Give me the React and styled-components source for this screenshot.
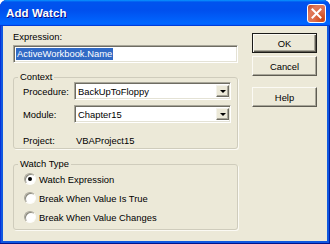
import React from 'react';
import styled, { createGlobalStyle } from 'styled-components';

const Global = createGlobalStyle`
  html, body {
    margin: 0;
    padding: 0;
    background: #ffffff;
  }
  body {
    font-family: "Liberation Sans", Arial, sans-serif;
    font-size: 9.4px;
    color: #000;
  }
`;

const Window = styled.div`
  width: 330px;
  height: 244px;
  box-sizing: border-box;
  display: flex;
  flex-direction: column;
  padding: 0 3px 3px;
  border-radius: 7px 7px 0 0;
  overflow: hidden;
  background: #1058e0;
  box-shadow: inset 0 -1px 0 #00138c, inset 1px 0 0 #0831d9, inset -1px 0 0 #001ea0;
`;

const TitleBar = styled.div`
  height: 26px;
  flex: none;
  margin: 0 -3px;
  display: flex;
  align-items: center;
  justify-content: space-between;
  padding: 0 4px 0 6px;
  background: linear-gradient(180deg, #0997ff, #0053ee 8%, #0050ee 40%, #0066ff 88%, #0066ff 93%, #005bff 95%, #003dd7 96%, #003dd7);
`;

const Title = styled.span`
  color: #fff;
  font-weight: bold;
  font-size: 11.5px;
  letter-spacing: 0.1px;
  text-shadow: 1px 1px 0 #0f1089;
`;

const CloseButton = styled.div`
  width: 19px;
  height: 19px;
  box-sizing: border-box;
  border: 1px solid #fff;
  border-radius: 3px;
  background: radial-gradient(circle at 85% 85%, #cc4614 0%, #dc6c4a 40%, #e07a5c 70%, #c2431f 100%);
  display: flex;
  align-items: center;
  justify-content: center;
`;

const Body = styled.div`
  flex: 1;
  display: flex;
  gap: 14px;
  padding: 5px 10px 0;
  background: #ece9d8;
`;

const LeftCol = styled.div`
  width: 225px;
  display: flex;
  flex-direction: column;
`;

const RightCol = styled.div`
  width: 65px;
  display: flex;
  flex-direction: column;
  padding-top: 2px;
`;

const Label = styled.div`
  line-height: 12px;
  height: 12px;
  white-space: nowrap;
`;

const sunken = `
  box-sizing: border-box;
  background: #fff;
  border: 1px solid;
  border-color: #a8a699 #ffffff #ffffff #a8a699;
  box-shadow: inset 1px 1px 0 #6e6c62, inset -1px -1px 0 #e4e2d5;
`;

const TextBox = styled.div`
  ${sunken}
  margin-top: 2px;
  height: 18px;
  padding: 0 2px;
  display: flex;
  align-items: center;
`;

const Selected = styled.span`
  background: #316ac5;
  color: #fff;
  padding: 0 1px;
  line-height: 12px;
`;

const Group = styled.fieldset`
  margin: ${(p) => p.$top}px 0 0;
  padding: 0 6px ${(p) => p.$bottom}px 4px;
  border: 1px solid #cfccbc;
  border-radius: 3px;
  box-shadow: 1px 1px 0 #fbfaf4;
  min-width: 0;
  display: flex;
  flex-direction: column;
`;

const Legend = styled.legend`
  padding: 0 2px;
  line-height: 10px;
  height: 10px;
`;

const FieldRow = styled.div`
  display: flex;
  align-items: center;
  height: ${(p) => p.$h}px;
  margin-top: ${(p) => p.$gap || 0}px;
  padding-left: 5px;
`;

const FieldLabel = styled.div`
  width: 51px;
  flex: none;
  white-space: nowrap;
`;

const Value = styled.div`
  padding-left: 2px;
`;

const Combo = styled.div`
  ${sunken}
  flex: 1;
  height: 18px;
  display: flex;
  align-items: stretch;
  padding: 2px 1px 2px 2px;
`;

const ComboText = styled.div`
  flex: 1;
  display: flex;
  align-items: center;
  padding-left: 1px;
`;

const DropButton = styled.div`
  width: 13px;
  box-sizing: border-box;
  background: #ece9d8;
  border: 1px solid;
  border-color: #f4f3ec #6e6c62 #6e6c62 #f4f3ec;
  box-shadow: inset -1px -1px 0 #a8a699;
  display: flex;
  align-items: center;
  justify-content: center;
`;

const Arrow = styled.div`
  width: 0;
  height: 0;
  border-left: 3px solid transparent;
  border-right: 3px solid transparent;
  border-top: 3px solid #000;
`;

const RadioRow = styled.div`
  display: flex;
  align-items: center;
  gap: 3px;
  height: 14px;
  margin-top: ${(p) => p.$gap}px;
  padding-left: 6px;
`;

const RadioDot = styled.div`
  width: 12px;
  height: 12px;
  box-sizing: border-box;
  border-radius: 50%;
  background: #fff;
  border: 1px solid;
  border-color: #a8a699 #fdfdf9 #fdfdf9 #a8a699;
  box-shadow: inset 1px 1px 0 #8a887c;
  display: flex;
  align-items: center;
  justify-content: center;

  &::after {
    content: '';
    width: 4px;
    height: 4px;
    border-radius: 50%;
    background: ${(p) => (p.$checked ? '#000' : 'transparent')};
  }
`;

const Button = styled.div`
  height: 20px;
  box-sizing: border-box;
  margin-top: ${(p) => p.$gap}px;
  display: flex;
  align-items: center;
  justify-content: center;
  background: #ece9d8;
  border: 1px solid;
  border-color: ${(p) => (p.$default ? '#1b1b18' : '#fbfaf4 #5e5c52 #5e5c52 #fbfaf4')};
  box-shadow: ${(p) =>
    p.$default
      ? 'inset 1px 1px 0 #fbfaf4, inset -1px -1px 0 #5e5c52, inset -2px -2px 0 #a8a699'
      : 'inset -1px -1px 0 #a8a699'};
`;

const radios = [
  { label: 'Watch Expression', checked: true },
  { label: 'Break When Value Is True' },
  { label: 'Break When Value Changes' },
];

export default function App() {
  return (
    <>
      <Global />
      <Window>
        <TitleBar>
          <Title>Add Watch</Title>
          <CloseButton>
            <svg width="11" height="11" viewBox="0 0 11 11">
              <path d="M1.5 1.5 L9.5 9.5 M9.5 1.5 L1.5 9.5" stroke="#fff" strokeWidth="2" strokeLinecap="square" />
            </svg>
          </CloseButton>
        </TitleBar>
        <Body>
          <LeftCol>
            <Label>Expression:</Label>
            <TextBox>
              <Selected>ActiveWorkbook.Name</Selected>
            </TextBox>

            <Group $top={9} $bottom={2}>
              <Legend>Context</Legend>
              <FieldRow $h={18}>
                <FieldLabel>Procedure:</FieldLabel>
                <Combo>
                  <ComboText>BackUpToFloppy</ComboText>
                  <DropButton><Arrow /></DropButton>
                </Combo>
              </FieldRow>
              <FieldRow $h={18} $gap={5}>
                <FieldLabel>Module:</FieldLabel>
                <Combo>
                  <ComboText>Chapter15</ComboText>
                  <DropButton><Arrow /></DropButton>
                </Combo>
              </FieldRow>
              <FieldRow $h={12} $gap={11}>
                <FieldLabel>Project:</FieldLabel>
                <Value>VBAProject15</Value>
              </FieldRow>
            </Group>

            <Group $top={10} $bottom={5}>
              <Legend>Watch Type</Legend>
              {radios.map((r, i) => (
                <RadioRow key={r.label} $gap={i === 0 ? 3 : 5}>
                  <RadioDot $checked={r.checked} />
                  <span>{r.label}</span>
                </RadioRow>
              ))}
            </Group>
          </LeftCol>

          <RightCol>
            <Button $default $gap={0}>OK</Button>
            <Button $gap={3}>Cancel</Button>
            <Button $gap={11}>Help</Button>
          </RightCol>
        </Body>
      </Window>
    </>
  );
}
